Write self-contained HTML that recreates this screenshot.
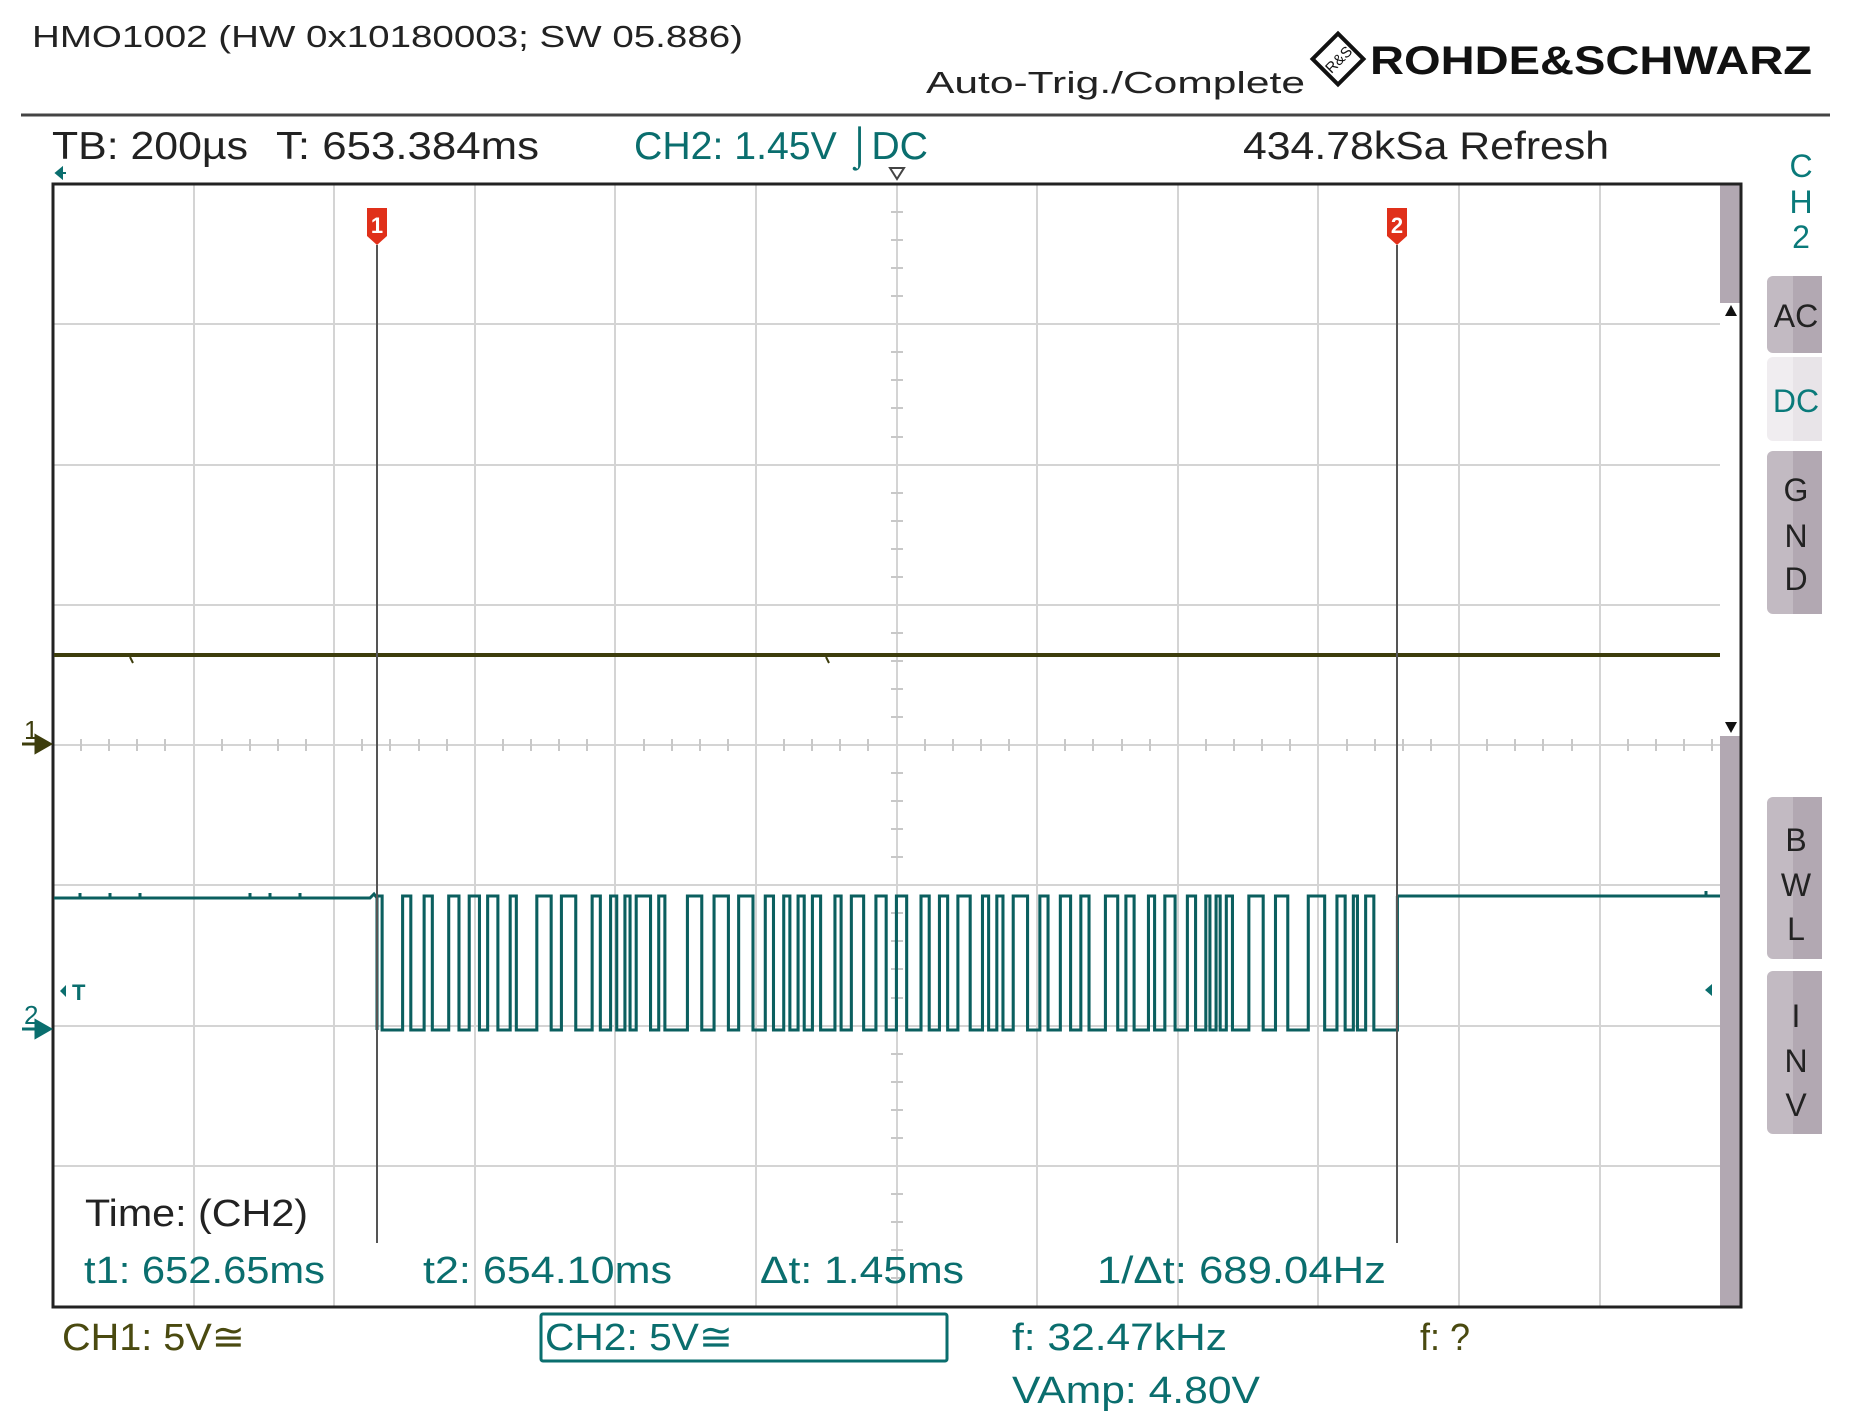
<!DOCTYPE html>
<html><head><meta charset="utf-8"><style>
html,body{margin:0;padding:0;background:#fff;}
svg{display:block;}
text{font-family:"Liberation Sans",sans-serif;}
</style></head><body>
<svg width="1850" height="1426" viewBox="0 0 1850 1426" xmlns="http://www.w3.org/2000/svg">
<rect width="1850" height="1426" fill="#fff"/>
<!-- header -->
<text x="32" y="47" font-size="31" fill="#222" textLength="711" lengthAdjust="spacingAndGlyphs">HMO1002 (HW 0x10180003; SW 05.886)</text>
<text x="926" y="93" font-size="31" fill="#222" textLength="379" lengthAdjust="spacingAndGlyphs">Auto-Trig./Complete</text>
<g transform="translate(1338,59)">
<rect x="-18" y="-18" width="36" height="36" transform="rotate(45)" fill="#fff" stroke="#111" stroke-width="4"/>
<text x="0" y="6" font-size="15" text-anchor="middle" fill="#111" transform="rotate(-45)">R&amp;S</text>
</g>
<text x="1370" y="74" font-size="40" font-weight="bold" fill="#111" textLength="442" lengthAdjust="spacingAndGlyphs">ROHDE&amp;SCHWARZ</text>
<line x1="21" y1="115" x2="1830" y2="115" stroke="#444" stroke-width="3"/>
<!-- top info row -->
<g font-size="39">
<text x="52" y="159" fill="#222" textLength="196" lengthAdjust="spacingAndGlyphs">TB: 200µs</text>
<text x="276" y="159" fill="#222" textLength="263" lengthAdjust="spacingAndGlyphs">T: 653.384ms</text>
<text x="634" y="159" fill="#0a6e6e" textLength="294" lengthAdjust="spacingAndGlyphs">CH2: 1.45V ⌡DC</text>
<text x="1243" y="159" fill="#222" textLength="366" lengthAdjust="spacingAndGlyphs">434.78kSa Refresh</text>
</g>
<path d="M56 173 l6 -5 v10 z M62 173 h4" fill="#0a6e6e" stroke="#0a6e6e" stroke-width="2"/>
<path d="M890 168 h14 l-7 11 z" fill="#fff" stroke="#444" stroke-width="2"/>
<!-- grid -->
<g stroke="#d4d4d4" stroke-width="2">
<line x1="194" y1="184" x2="194" y2="1307"/>
<line x1="334" y1="184" x2="334" y2="1307"/>
<line x1="475" y1="184" x2="475" y2="1307"/>
<line x1="615" y1="184" x2="615" y2="1307"/>
<line x1="756" y1="184" x2="756" y2="1307"/>
<line x1="897" y1="184" x2="897" y2="1307"/>
<line x1="1037" y1="184" x2="1037" y2="1307"/>
<line x1="1178" y1="184" x2="1178" y2="1307"/>
<line x1="1318" y1="184" x2="1318" y2="1307"/>
<line x1="1459" y1="184" x2="1459" y2="1307"/>
<line x1="1600" y1="184" x2="1600" y2="1307"/>
<line x1="53" y1="324" x2="1720" y2="324"/>
<line x1="53" y1="465" x2="1720" y2="465"/>
<line x1="53" y1="605" x2="1720" y2="605"/>
<line x1="53" y1="745" x2="1720" y2="745"/>
<line x1="53" y1="885" x2="1720" y2="885"/>
<line x1="53" y1="1026" x2="1720" y2="1026"/>
<line x1="53" y1="1166" x2="1720" y2="1166"/>
</g>
<g stroke="#c8c8c8" stroke-width="2">
<path d="M81 739v12M109 739v12M137 739v12M165 739v12M222 739v12M250 739v12M278 739v12M306 739v12M362 739v12M390 739v12M419 739v12M447 739v12M503 739v12M531 739v12M559 739v12M587 739v12M644 739v12M672 739v12M700 739v12M728 739v12M784 739v12M812 739v12M840 739v12M868 739v12M925 739v12M953 739v12M981 739v12M1009 739v12M1065 739v12M1093 739v12M1122 739v12M1150 739v12M1206 739v12M1234 739v12M1262 739v12M1290 739v12M1347 739v12M1375 739v12M1403 739v12M1431 739v12M1487 739v12M1515 739v12M1543 739v12M1572 739v12M1628 739v12M1656 739v12M1684 739v12M1712 739v12"/>
<path d="M891 212h12M891 240h12M891 268h12M891 296h12M891 352h12M891 380h12M891 408h12M891 437h12M891 493h12M891 521h12M891 549h12M891 577h12M891 633h12M891 661h12M891 689h12M891 717h12M891 773h12M891 801h12M891 829h12M891 857h12M891 913h12M891 941h12M891 969h12M891 998h12M891 1054h12M891 1082h12M891 1110h12M891 1138h12M891 1194h12M891 1222h12M891 1250h12M891 1278h12"/>
</g>
<rect x="1720" y="184" width="20" height="119" fill="#b2a8b2"/>
<rect x="1720" y="736" width="20" height="571" fill="#b2a8b2"/>
<path d="M1725 316 l6 -11 l6 11 z" fill="#111"/>
<path d="M1725 722 h12 l-6 11 z" fill="#111"/>
<rect x="53" y="184" width="1688" height="1123" fill="none" stroke="#222" stroke-width="3"/>
<!-- CH1 trace -->
<path d="M54 655 H1720" stroke="#3d3d0c" stroke-width="4" fill="none"/>
<path d="M130 657 l3 6 M826 657 l3 6" stroke="#3d3d0c" stroke-width="2"/>
<!-- CH2 trace -->
<g stroke="#0b5f5f" stroke-width="3" fill="none" stroke-linejoin="miter">
<path d="M54 898 H370 l4 -4 l3 4 M1397 896 H1720"/>
<path d="M80 898v-5M110 898v-5M140 898v-5M250 898v-5M270 898v-5M300 898v-5M1706 896v-5"/>
<path transform="translate(377,0) scale(1.0245,1) translate(-377,0)" d="M377 1030 v-134 h5 v134 h20 v-134 h8 v134 h13 v-134 h8 v134 h16 v-134 h10 v134 h10 v-134 h10 v134 h8 v-134 h10 v134 h12 v-134 h6 v134 h20 v-134 h14 v134 h10 v-134 h14 v134 h16 v-134 h8 v134 h10 v-134 h6 v134 h8 v-134 h5 v134 h6 v-134 h14 v134 h8 v-134 h6 v134 h22 v-134 h14 v134 h12 v-134 h14 v134 h10 v-134 h14 v134 h12 v-134 h8 v134 h10 v-134 h6 v134 h8 v-134 h6 v134 h8 v-134 h8 v134 h14 v-134 h6 v134 h10 v-134 h12 v134 h12 v-134 h10 v134 h10 v-134 h10 v134 h14 v-134 h8 v134 h10 v-134 h8 v134 h10 v-134 h12 v134 h12 v-134 h6 v134 h8 v-134 h6 v134 h10 v-134 h14 v134 h12 v-134 h8 v134 h12 v-134 h10 v134 h10 v-134 h8 v134 h16 v-134 h12 v134 h8 v-134 h8 v134 h14 v-134 h6 v134 h10 v-134 h10 v134 h12 v-134 h8 v134 h10 v-134 h4 v134 h6 v-134 h4 v134 h6 v-134 h6 v134 h16 v-134 h14 v134 h12 v-134 h12 v134 h20 v-134 h16 v134 h12 v-134 h8 v134 h8 v-134 h4 v134 h8 v-134 h8 v134 H1373 v-134"/>
</g>
<!-- cursors -->
<g stroke="#555" stroke-width="2">
<line x1="377" y1="245" x2="377" y2="1243"/>
<line x1="1397" y1="245" x2="1397" y2="1243"/>
</g>
<g fill="#e0301a">
<path d="M367 208 h20 v28 l-10 9 l-10 -9 z"/>
<path d="M1387 208 h20 v28 l-10 9 l-10 -9 z"/>
</g>
<text x="377" y="233" font-size="22" font-weight="bold" text-anchor="middle" fill="#fff">1</text>
<text x="1397" y="233" font-size="22" font-weight="bold" text-anchor="middle" fill="#fff">2</text>
<!-- ground markers -->
<text x="24" y="739" font-size="26" fill="#3d3d0c">1</text>
<path d="M22 744 h20 M36 736 l14 8 l-14 8 z" stroke="#3d3d0c" stroke-width="3" fill="#3d3d0c"/>
<text x="24" y="1024" font-size="26" fill="#0a6e6e">2</text>
<path d="M22 1029 h20 M36 1021 l14 8 l-14 8 z" stroke="#0a6e6e" stroke-width="3" fill="#0a6e6e"/>
<path d="M60 991 l6 -6 v12 z" fill="#0a6e6e"/>
<text x="72" y="1000" font-size="22" font-weight="bold" fill="#0a6e6e">T</text>
<path d="M1705 990 l7 -6 v12 z" fill="#0a6e6e"/>
<!-- measurement text -->
<g font-size="38">
<text x="85" y="1226" fill="#222" textLength="223" lengthAdjust="spacingAndGlyphs">Time: (CH2)</text>
<text x="84" y="1283" fill="#0a6e6e" textLength="241" lengthAdjust="spacingAndGlyphs">t1: 652.65ms</text>
<text x="423" y="1283" fill="#0a6e6e" textLength="249" lengthAdjust="spacingAndGlyphs">t2: 654.10ms</text>
<text x="760" y="1283" fill="#0a6e6e" textLength="204" lengthAdjust="spacingAndGlyphs">Δt: 1.45ms</text>
<text x="1097" y="1283" fill="#0a6e6e" textLength="289" lengthAdjust="spacingAndGlyphs">1/Δt: 689.04Hz</text>
<text x="62" y="1350" fill="#4a4a10" textLength="183" lengthAdjust="spacingAndGlyphs">CH1: 5V≅</text>
<text x="545" y="1350" fill="#0a6e6e" textLength="188" lengthAdjust="spacingAndGlyphs">CH2: 5V≅</text>
<text x="1012" y="1350" fill="#0a6e6e" textLength="215" lengthAdjust="spacingAndGlyphs">f: 32.47kHz</text>
<text x="1420" y="1350" fill="#4a4a10" textLength="50" lengthAdjust="spacingAndGlyphs">f: ?</text>
<text x="1012" y="1403" fill="#0a6e6e" textLength="248" lengthAdjust="spacingAndGlyphs">VAmp: 4.80V</text>
</g>
<rect x="541" y="1314" width="406" height="47" rx="2" fill="none" stroke="#0a6e6e" stroke-width="3"/>
<!-- right panel -->
<g font-size="32" fill="#0a7a7a" text-anchor="middle">
<text x="1801" y="177">C</text>
<text x="1801" y="213">H</text>
<text x="1801" y="248">2</text>
</g>
<g>
<rect x="1767" y="276" width="55" height="77" rx="6" fill="#c2bac2"/><rect x="1793" y="276" width="29" height="77" fill="#b2a8b2"/>
<rect x="1767" y="357" width="55" height="84" rx="6" fill="#f0edf0"/><rect x="1793" y="357" width="29" height="84" fill="#e8e4e8"/>
<rect x="1767" y="451" width="55" height="163" rx="6" fill="#c2bac2"/><rect x="1793" y="451" width="29" height="163" fill="#b2a8b2"/>
<rect x="1767" y="797" width="55" height="162" rx="6" fill="#c2bac2"/><rect x="1793" y="797" width="29" height="162" fill="#b2a8b2"/>
<rect x="1767" y="971" width="55" height="163" rx="6" fill="#c2bac2"/><rect x="1793" y="971" width="29" height="163" fill="#b2a8b2"/>
</g>
<g font-size="32" fill="#222" text-anchor="middle">
<text x="1796" y="327">AC</text>
<text x="1796" y="501">G</text>
<text x="1796" y="547">N</text>
<text x="1796" y="590">D</text>
<text x="1796" y="851">B</text>
<text x="1796" y="896">W</text>
<text x="1796" y="940">L</text>
<text x="1796" y="1027">I</text>
<text x="1796" y="1072">N</text>
<text x="1796" y="1116">V</text>
</g>
<text x="1796" y="412" font-size="32" fill="#0a7a7a" text-anchor="middle">DC</text>
</svg>
</body></html>
